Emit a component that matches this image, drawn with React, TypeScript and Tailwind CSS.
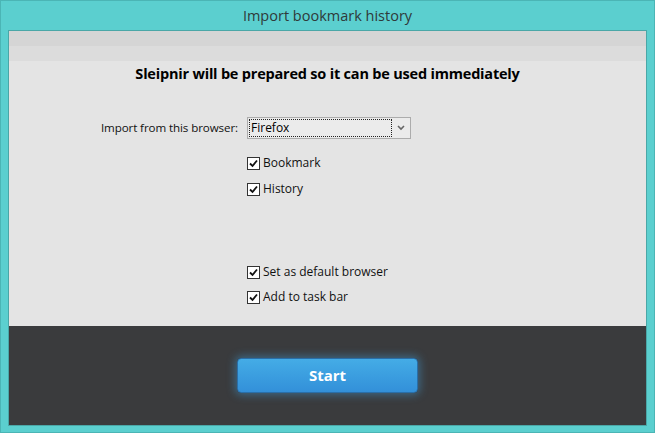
import React from "react";

function Check() {
  return (
    <span className="w-[13px] h-[13px] border border-[#333] bg-white flex items-center justify-center shrink-0">
      <svg width="9" height="9" viewBox="0 0 9 9">
        <path d="M1 4.5 L3.5 7 L8 1.5" stroke="#111" strokeWidth="1.8" fill="none" />
      </svg>
    </span>
  );
}

function Row({ label }: { label: string }) {
  return (
    <div className="flex items-center gap-[3px] h-[16px]">
      <Check />
      <span className="text-[12px] text-[#111]">{label}</span>
    </div>
  );
}

export default function App() {
  return (
    <div
      className="w-[655px] h-[433px] bg-[#5bcfcf] border border-[#4bb5b5] flex flex-col px-[7px] pb-[6px]"
      style={{ fontFamily: '"Open Sans", "Noto Sans", sans-serif' }}
    >
      <div className="h-[29px] flex items-center justify-center text-[14.5px] text-[#2f3a3a]">
        Import bookmark history
      </div>
      <div className="flex-1 flex flex-col border border-[#4aa7a7] bg-[#e4e4e4]">
        <div className="h-[15px] bg-[#d5d5d5]" />
        <div className="h-[15px] bg-[#dcdcdc]" />
        <div className="flex-1 flex flex-col">
          <div className="h-[26px] flex items-center justify-center text-[14.5px] font-bold text-black tracking-[-0.2px]">
            Sleipnir will be prepared so it can be used immediately
          </div>
          <div className="flex items-center mt-[30px] h-[22px]">
            <div className="w-[238px] text-right text-[11.6px] text-[#111] pr-[9px] tracking-[-0.1px]">
              Import from this browser:
            </div>
            <div className="w-[164px] h-[22px] border border-[#acacac] bg-[#ebebeb] flex items-center px-[1px]">
              <div className="flex-1 h-[18px] border border-dotted border-[#222] flex items-center text-[12px] text-black pl-[1px]">
                Firefox
              </div>
              <div className="w-[17px] flex items-center justify-center">
                <svg width="8" height="6" viewBox="0 0 8 6">
                  <path d="M1 1 L4 4 L7 1" stroke="#666" strokeWidth="1.6" fill="none" />
                </svg>
              </div>
            </div>
          </div>
          <div className="flex flex-col gap-[10px] ml-[238px] mt-[16px]">
            <Row label="Bookmark" />
            <Row label="History" />
          </div>
          <div className="flex flex-col gap-[9px] ml-[238px] mt-[67px]">
            <Row label="Set as default browser" />
            <Row label="Add to task bar" />
          </div>
        </div>
        <div className="h-[99px] bg-[#3a3b3d] flex items-center justify-center">
          <button className="w-[181px] h-[35px] rounded-[4px] border border-[#2a6fa8] bg-gradient-to-b from-[#44ace6] to-[#3390d9] text-white font-bold text-[15px] shadow-[0_0_8px_2px_rgba(66,160,220,0.45)]">
            Start
          </button>
        </div>
      </div>
    </div>
  );
}
